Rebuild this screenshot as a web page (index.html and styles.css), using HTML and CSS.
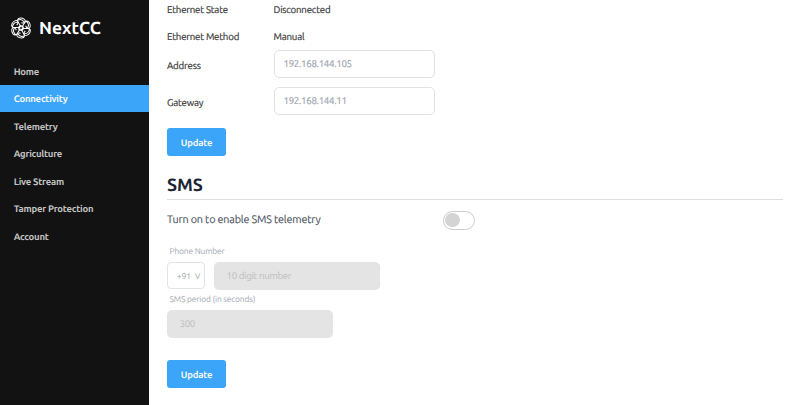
FILE: index.html
```html
<!DOCTYPE html>
<html lang="en">
<head>
<meta charset="utf-8">
<title>NextCC</title>
<link rel="stylesheet" href="styles.css">
</head>
<body>
<div class="app">
  <aside class="sidebar">
    <div class="brand">
      <svg class="logo" viewBox="-12 -12 24 24" fill="none" stroke="#fff" stroke-width="1.1">
        <defs><path id="petal" d="M0-1L-2.6-5.6C-4.6-8-4-10.5-1-10.8C2.6-11 5.2-9 4.6-6.8C4-5.4 2.4-5.2 .4-5.6M-3.4-8.6C-1-9.6 2-8.8 3.4-6.6"/></defs>
        <use href="#petal"/>
        <use href="#petal" transform="rotate(60)"/>
        <use href="#petal" transform="rotate(120)"/>
        <use href="#petal" transform="rotate(180)"/>
        <use href="#petal" transform="rotate(240)"/>
        <use href="#petal" transform="rotate(300)"/>
        <circle r="2.4" stroke-width="1.4"/>
      </svg>
      <span class="name">NextCC</span>
    </div>
    <nav class="nav">
      <a>Home</a>
      <a class="active">Connectivity</a>
      <a>Telemetry</a>
      <a>Agriculture</a>
      <a>Live Stream</a>
      <a>Tamper Protection</a>
      <a>Account</a>
    </nav>
  </aside>
  <main class="main">
    <div class="row state"><span>Ethernet State</span><span>Disconnected</span></div>
    <div class="row method"><span>Ethernet Method</span><span>Manual</span></div>
    <div class="row field"><label>Address</label><input class="input" placeholder="192.168.144.105"></div>
    <div class="row field"><label>Gateway</label><input class="input" placeholder="192.168.144.11"></div>
    <button class="button">Update</button>
    <h2 class="heading">SMS</h2>
    <div class="enable"><span>Turn on to enable SMS telemetry</span><span class="toggle"></span></div>
    <div class="caption">Phone Number</div>
    <div class="phone">
      <div class="code"><span>+91</span><span>V</span></div>
      <input class="input disabled" placeholder="10 digit number" disabled>
    </div>
    <div class="caption period">SMS period (in seconds)</div>
    <input class="input disabled" placeholder="300" disabled>
    <button class="button last">Update</button>
  </main>
</div>
</body>
</html>
```
FILE: styles.css
```css
* { box-sizing: border-box; }
body {
  margin: 0;
  background: #fff;
  font-family: Ubuntu, "Noto Sans", sans-serif;
  font-size: 9.7px;
  letter-spacing: -.2px;
  color: #3b3b3b;
  text-rendering: geometricPrecision;
}
.app { display: flex; height: 405px; overflow: hidden; }
.sidebar { width: 149px; flex: none; background: #121212; color: #c4c4c4; }
.brand { display: flex; align-items: center; height: 57.4px; padding: 0 0 2px 10px; }
.logo { width: 22px; height: 22px; }
.name { margin-left: 7px; padding-top: 1px; color: #fff; font-size: 17.4px; font-weight: 700; letter-spacing: 0; }
.nav a {
  display: flex;
  align-items: center;
  height: 27.5px;
  padding-left: 13.7px;
  font-size: 9.5px;
  font-weight: 600;
  letter-spacing: -.22px;
}
.nav .active { background: #3ba5f9; color: #f3f8fd; }
.main { flex: 1; padding: 0 17px 0 18px; }
.row { display: grid; grid-template-columns: 106.5px 161.5px; align-items: center; -webkit-text-stroke: .2px; }
.state { height: 18px; }
.method { height: 32px; padding-top: 5px; }
.field { height: 28px; margin-bottom: 9px; }
.field label { padding-top: 2px; }
.input {
  display: block;
  width: 100%;
  height: 28px;
  padding: 0 9px 1px;
  border: 1px solid #e2e2e5;
  border-radius: 5px;
  background: #fff;
  font: inherit;
  letter-spacing: -.3px;
  text-rendering: inherit;
}
.input::placeholder { color: #a0a5b1; opacity: 1; }
.button {
  display: block;
  width: 59px;
  height: 28px;
  margin-top: 13px;
  padding: 0;
  border: 0;
  border-radius: 3px;
  background: #3ba5f9;
  color: #f3f8fd;
  font: inherit;
  font-size: 9.5px;
  font-weight: 600;
  letter-spacing: -.2px;
  text-rendering: inherit;
}
.heading {
  height: 34px;
  margin: 10px 0 0;
  padding-top: 8px;
  border-bottom: 1px solid #dedede;
  color: #1b2433;
  font-size: 17.8px;
  line-height: 22px;
  font-weight: 700;
  letter-spacing: -.1px;
}
.enable { display: grid; grid-template-columns: 276px auto; align-items: center; height: 40px; color: #4b5360; font-size: 10.8px; letter-spacing: -.18px; -webkit-text-stroke: .12px; }
.toggle { width: 32px; height: 19px; padding: 1.5px 1px; border: 1px solid #ccc; border-radius: 10px; }
.toggle::before { content: ""; display: block; width: 15px; height: 14px; border-radius: 50%; background: #d4d4d4; }
.caption { height: 22px; padding: 5px 0 0 2.5px; color: #a0a5b1; font-size: 8.4px; line-height: 12px; letter-spacing: -.13px; }
.phone { display: flex; gap: 9px; }
.code { display: flex; align-items: center; gap: 4px; width: 38px; height: 27px; padding-left: 9px; border: 1px solid #dfe3ea; border-radius: 4px; color: #9b9fa7; font-size: 8.4px; letter-spacing: -.1px; }
.input.disabled { width: 166px; padding: 0 12.5px 1px; border: 0; background: #e4e4e4; }
.input.disabled::placeholder { color: #bdbdbf; }
.period { height: 20px; padding-top: 3px; }
.last { margin-top: 22px; }
```
